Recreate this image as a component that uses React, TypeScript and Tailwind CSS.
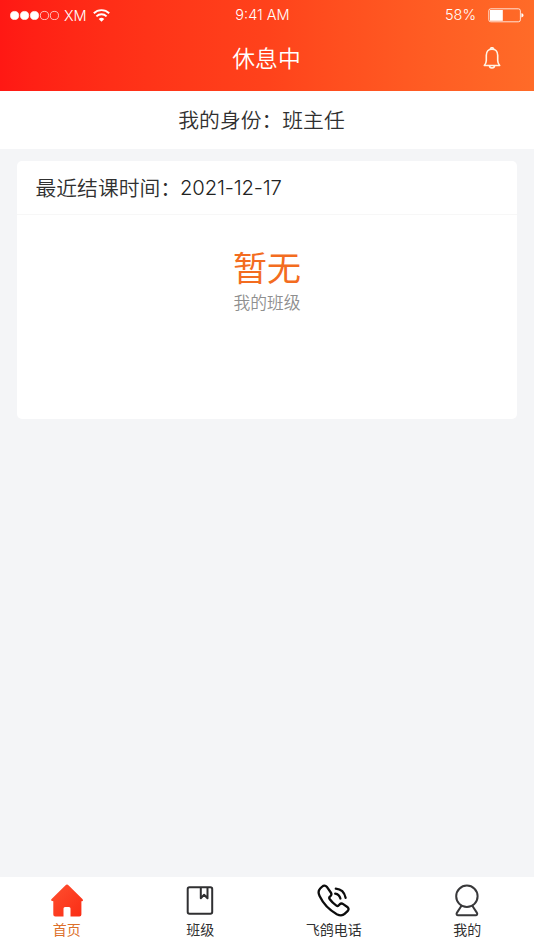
import type { ReactNode } from 'react'

interface Tab {
  id: string
  label: string
  icon: ReactNode
  active?: boolean
}

function SignalDots() {
  return (
    <svg width="49" height="10" viewBox="0 0 49 10" stroke="white" strokeWidth="0.7">
      {[0, 1, 2, 3, 4].map((i) => (
        <circle key={i} cx={4.6 + i * 9.95} cy="5.5" r="4.1" fill={i < 3 ? 'white' : 'none'} />
      ))}
    </svg>
  )
}

function WifiIcon() {
  return (
    <svg width="17" height="13" viewBox="0 0 17 13" fill="none" stroke="white" strokeWidth="1.9">
      <path d="M0.8 4.3a11 11 0 0 1 15.4 0" />
      <path d="M3.4 7.4a7.3 7.3 0 0 1 10.2 0" />
      <path d="M8.5 12.8 5.7 10a4 4 0 0 1 5.6 0z" fill="white" stroke="none" />
    </svg>
  )
}

function BatteryIcon() {
  return (
    <svg width="36" height="15" viewBox="0 0 36 15" fill="none">
      <rect x="0.8" y="0.8" width="31.6" height="13" rx="2" stroke="white" strokeOpacity="0.8" strokeWidth="1" />
      <rect x="2" y="2" width="12.8" height="10.8" fill="white" />
      <path d="M33.4 5.2c1.6.3 2.1 1.1 2.1 2.1s-.5 1.8-2.1 2.1z" fill="white" />
    </svg>
  )
}

function BellIcon() {
  return (
    <svg width="18" height="22" viewBox="0 0 18 22" fill="none" stroke="#fff3e4" strokeWidth="1.6" strokeLinejoin="round">
      <path d="M9 2.1c-3.5 0-5.7 2.7-5.7 6.2v5.2c0 2-.6 3.4-2 5h15.4c-1.4-1.6-2-3-2-5V8.3c0-3.5-2.2-6.2-5.7-6.2z" />
      <path d="M7.5 1.9a1.5 1.2 0 0 1 3 0M6.5 18.8a2.5 2.2 0 0 0 5 0" />
    </svg>
  )
}

function HomeIcon() {
  return (
    <svg width="34" height="34" viewBox="0 0 34 34">
      <defs>
        <linearGradient id="home" x1="0" y1="0" x2="1" y2="1">
          <stop offset="0" stopColor="#ff5030" />
          <stop offset="1" stopColor="#fa2c14" />
        </linearGradient>
      </defs>
      <path
        d="M15.3 1.4a2.5 2.5 0 0 1 3.4 0L32.4 15c1.1 1.2.6 2.2-1 2.2v13.3a2 2 0 0 1-2 2h-8.900v-7.900a1.500 1.500 0 0 0-1.500-1.500h-4a1.500 1.500 0 0 0-1.500 1.500v7.900H5.300a2 2 0 0 1-2-2V17.200c-2.100 0-2.800-1-1.700-2.200z"
        fill="url(#home)"
      />
    </svg>
  )
}

function BookIcon() {
  return (
    <svg width="34" height="34" viewBox="0 0 34 34" fill="none" stroke="#303032" strokeWidth="2" strokeLinejoin="round">
      <rect x="4.700" y="3.300" width="24.500" height="26.500" rx="1.800" />
      <path d="M17.800 3.300v10.900l3.300-3.400 3.400 3.400V3.300" />
    </svg>
  )
}

function PhoneIcon() {
  return (
    <svg width="34" height="34" viewBox="0 0 34 34" fill="none" stroke="#0c0c0c" strokeWidth="2.300" strokeLinecap="round" strokeLinejoin="round">
      <path d="M5.300 2.500 3.200 4.500C1.300 6.400 1.200 9.200 2.600 12.100c3.500 7.400 9.700 14 17.200 18.100 2.900 1.500 5.600 1.800 7.800-.300l3.200-3.100c1.100-1.100 1-2.500-.100-3.500l-4.500-3.200c-1.300-.900-2.600-.700-3.600.300l-1 1.100c-.700.700-1.500.600-2.200.100-3.100-2.100-5.100-4.200-6.800-6.600-.5-.8-.5-1.500.1-2.100l.9-.9c1-1 1-2.300.2-3.500L9.700 2.700C8.500 1.300 6.700 1.100 5.300 2.500z" />
      <path d="M18.200 9.600c2.900.3 4.400 1.900 5.200 4.900M18.800 4.700c5.200.4 8.700 3.900 9.800 9.100" />
    </svg>
  )
}

function UserIcon() {
  return (
    <svg width="34" height="34" viewBox="0 0 34 34" fill="none" stroke="#38383a" strokeWidth="2" strokeLinecap="round" strokeLinejoin="round">
      <circle cx="16.900" cy="12.300" r="10.700" />
      <path d="M11.300 22c-1.400 2.600-3.300 4.700-4.500 7-.6 1.300-.1 2.300 1.300 2.300h17.600c1.400 0 1.900-1 1.300-2.300-1.200-2.300-3.100-4.400-4.500-7" />
    </svg>
  )
}

const tabs: Tab[] = [
  { id: 'home', label: '首页', icon: <HomeIcon />, active: true },
  { id: 'class', label: '班级', icon: <BookIcon /> },
  { id: 'phone', label: '飞鸽电话', icon: <PhoneIcon /> },
  { id: 'mine', label: '我的', icon: <UserIcon /> },
]

export default function App() {
  return (
    <div className="flex h-[950px] w-[534px] flex-col overflow-hidden bg-[#f4f5f7] font-['Noto_Sans_CJK_SC',sans-serif] font-[350] text-[#303030]">
      {/* Header */}
      <header className="h-[91px] shrink-0 bg-linear-to-r from-[#ff1814] via-[#ff421b] to-[#ff6b28] text-white">
        <div className="grid h-[30px] grid-cols-[1fr_auto_1fr] items-center pr-[10px] pl-[10px] font-['Inter',sans-serif] text-[14.5px] font-light">
          <div className="flex items-center">
            <SignalDots />
            <span className="ml-[5px] pt-px">XM</span>
            <span className="ml-[6px]"><WifiIcon /></span>
          </div>
          <span className="mr-[9px] pb-px">9:41 AM</span>
          <div className="flex items-center justify-end gap-3">
            <span>58%</span>
            <BatteryIcon />
          </div>
        </div>
        <div className="grid h-[56px] grid-cols-[1fr_auto_1fr] items-center">
          <h1 className="col-start-2 mr-px text-[22.8px] leading-none font-[350]">休息中</h1>
          <button className="mr-[33px] justify-self-end">
            <BellIcon />
          </button>
        </div>
      </header>

      <div className="flex h-[58px] shrink-0 items-center justify-center bg-white pr-[11px] pb-0.5 text-[20.8px] leading-none">
        <span>我的身份：班主任</span>
      </div>

      <main className="flex-1 px-[17px] pt-3">
        <section className="h-[258px] rounded-[5px] bg-white">
          <div className="flex h-[54px] items-center border-b border-[#f7f7f7] pl-[18.5px] text-[20.8px] leading-none">
            <span>最近结课时间：</span>
            <span className="-ml-px pt-px font-['Inter',sans-serif] text-[20.3px] tracking-[-0.2px] text-[#222]">2021-12-17</span>
          </div>
          <div className="flex flex-col items-center pt-[33px]">
            <p className="text-[34px] leading-[38px] font-normal text-[#f36c20]">暂无</p>
            <p className="mt-1 text-[16.8px] leading-[24px] text-[#8f8f8f]">我的班级</p>
          </div>
        </section>
      </main>

      {/* Tab bar */}
      <nav className="grid h-[73px] shrink-0 grid-cols-4 bg-white">
        {tabs.map((tab) => (
          <button key={tab.id} className="flex flex-col items-center pt-[7px]">
            {tab.icon}
            <span className={`mt-px text-[14px] leading-[20px] font-normal ${tab.active ? 'text-[#dc702b]' : 'text-[#303030]'}`}>
              {tab.label}
            </span>
          </button>
        ))}
      </nav>
    </div>
  )
}
